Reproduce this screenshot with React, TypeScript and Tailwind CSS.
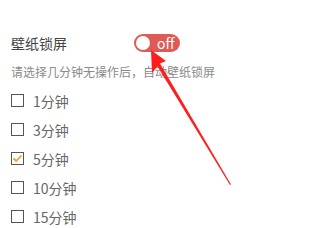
import { useState } from "react";

const OPTIONS = [
  { label: "1分钟", checked: false },
  { label: "3分钟", checked: false },
  { label: "5分钟", checked: true },
  { label: "10分钟", checked: false },
  { label: "15分钟", checked: false },
];

const FONT = {
  fontFamily: '"Microsoft YaHei", "Noto Sans CJK SC", "Noto Sans", sans-serif',
};

function Checkbox({ checked }: { checked: boolean }) {
  return (
    <span className="flex size-[13px] shrink-0 items-center justify-center border border-[#555] bg-white">
      {checked && (
        <svg width="11" height="9" viewBox="0 0 11 9" fill="none">
          <path d="M1.5 4.5 L4.2 7 L9.5 1.5" stroke="#f0a030" strokeWidth="1.8" />
        </svg>
      )}
    </span>
  );
}

export default function App() {
  const [on, setOn] = useState(false);

  return (
    <div
      className="relative h-[228px] w-[336px] overflow-hidden bg-white"
      style={FONT}
    >
      <div className="flex flex-col px-[11px] pt-[34px]">
        <div className="flex h-[18px] items-center">
          <span className="w-[123px] text-[14px] leading-none text-[#444]">壁纸锁屏</span>
          <button
            className="flex h-[18px] w-[46px] items-center gap-[7px] rounded-full bg-[#e05a55] pl-[2px]"
            onClick={() => setOn(!on)}
            type="button"
          >
            <span className="size-[14px] rounded-full bg-white" />
            <span className="pb-[1px] text-[14px] leading-none text-white">off</span>
          </button>
        </div>
        <p className="mt-[12px] text-[12px] leading-[16px] text-[#8a8a8a]">
          请选择几分钟无操作后，自动壁纸锁屏
        </p>
        <div className="mt-[6px] flex flex-col">
          {OPTIONS.map((opt) => (
            <label className="flex h-[29px] items-center gap-[9px]" key={opt.label}>
              <Checkbox checked={opt.checked} />
              <span className="text-[14px] leading-none text-[#666]">{opt.label}</span>
            </label>
          ))}
        </div>
      </div>

      {/* annotation arrow */}
      <svg
        className="pointer-events-none absolute left-0 top-0"
        height="228"
        width="336"
      >
        <path
          d="M151 50 L152 73 L157.5 66.5 L230 185 L231 184.5 L160 63.5 L166 61 Z"
          fill="#ff1e1e"
        />
      </svg>
    </div>
  );
}
